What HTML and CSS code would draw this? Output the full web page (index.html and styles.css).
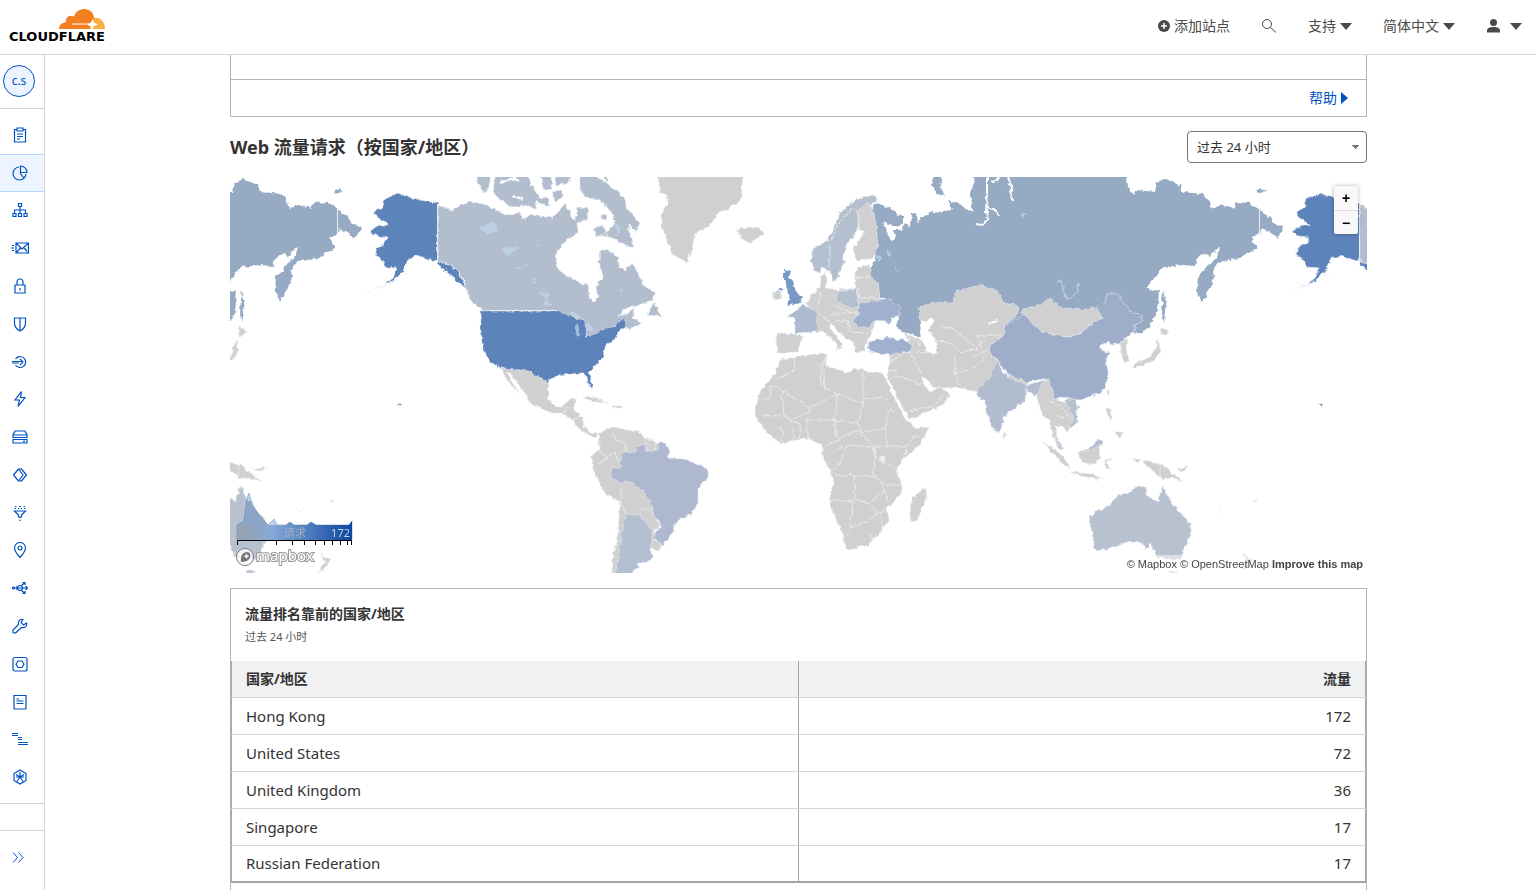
FILE: index.html
```html
<!DOCTYPE html>
<html lang="zh-CN">
<head>
<meta charset="utf-8">
<meta name="viewport" content="width=device-width, initial-scale=1">
<title>Cloudflare 流量分析</title>
<link rel="stylesheet" href="styles.css">
</head>
<body>
<header class="topbar">
  <a class="logo" href="#" aria-label="Cloudflare">
    <svg class="logo-cloud" viewBox="0 0 46 22" aria-hidden="true">
      <path fill="#f38020" d="M0 21C0 17 3 14.500 7 14.500C6 10 10 6 15 8.500C17 3 21 1 25 1C31 1 35 5 35 10L34 15L31 21Z"/>
      <path fill="#faae40" d="M31 21L35 10C41 9 46 14 46 21Z"/>
      <path fill="#fff" d="M33.500 11L35 14.500L39 16.500L35 18L33 22L31 18L28 16.500H13V15.500H29L32 14.500Z"/>
    </svg>
    <span class="logo-word">CLOUDFLARE</span>
  </a>
  <nav class="topnav" aria-label="顶部导航">
    <a class="topnav-item" href="#">
      <svg class="icon-plus" viewBox="0 0 12 12" aria-hidden="true"><circle cx="6" cy="6" r="6" fill="#4a4a4a"/><path d="M6 3V9M3 6H9" stroke="#fff" stroke-width="1.500"/></svg>
      添加站点
    </a>
    <button class="topnav-item" type="button" aria-label="搜索">
      <svg class="icon-16" viewBox="0 0 16 16" fill="none" stroke="#4a4a4a" aria-hidden="true"><circle cx="6" cy="6" r="4.500"/><path d="M9.500 9.500L15 14.500"/></svg>
    </button>
    <button class="topnav-item" type="button">支持 <span class="caret"></span></button>
    <button class="topnav-item" type="button">简体中文 <span class="caret"></span></button>
    <button class="topnav-item user" type="button" aria-label="帐户">
      <svg class="icon-16" viewBox="0 0 16 16" fill="#4a4a4a" aria-hidden="true"><circle cx="7.500" cy="4.500" r="3.500"/><path d="M1 14.500V12.500C1 10 4 9 7.500 9S14 10 14 12.500V14.500Z"/></svg>
      <span class="caret"></span>
    </button>
  </nav>
</header>
<div class="shell">
  <aside class="sidebar">
    <div class="account"><a class="avatar" href="#">c.s</a></div>
    <nav class="side-nav" aria-label="站点导航">
      <a href="#" aria-label="概述"><svg viewBox="0 0 16 16"><path d="M5 2.500H2.500V15H13.500V2.500H11M5 1H11V4H5ZM5 7H11M5 9.500H11M5 12H8"/></svg></a>
      <a class="active" href="#" aria-label="分析"><svg viewBox="0 0 16 16"><path d="M7 2A6.500 6.500 0 1 0 14 9M8.500 1V7.500H15A6.500 6.500 0 0 0 8.500 1ZM8 8L12 13"/></svg></a>
      <a href="#" aria-label="DNS"><svg viewBox="0 0 16 16"><path d="M6.500 1.500H9.500V4.500H6.500ZM8 4.500V11.500M2.500 11.500V8H13.500V11.500M1 11.500H4V14.500H1ZM6.500 11.500H9.500V14.500H6.500ZM12 11.500H15V14.500H12Z"/></svg></a>
      <a href="#" aria-label="电子邮件"><svg class="wide" viewBox="0 0 18 16"><path d="M5 3H17.500V13H5ZM5 3L11 9L17.500 3M5 13L9.500 8M17.500 13L13 8M1 5.500H3M0 8H3M1 10.500H3"/></svg></a>
      <a href="#" aria-label="SSL/TLS"><svg viewBox="0 0 16 16"><path d="M3 7H13V15H3ZM5 7V4A3 3 0 0 1 11 4V7M8 10V12.500"/></svg></a>
      <a href="#" aria-label="防火墙"><svg viewBox="0 0 16 16"><path d="M2.500 2H13.500V7C13.500 11 11 13.500 8 15C5 13.500 2.500 11 2.500 7ZM8 2V15"/></svg></a>
      <a href="#" aria-label="Access"><svg viewBox="0 0 16 16"><path d="M3.500 5A5.500 5.500 0 1 1 3.500 11M0 7.500H11M8 5L11 8L8 11M0 9H7"/></svg></a>
      <a href="#" aria-label="速度"><svg viewBox="0 0 16 16"><path d="M9.500 .5L3 9H7.500L6 15.500L13 6.500H8.500Z"/></svg></a>
      <a href="#" aria-label="缓存"><svg viewBox="0 0 16 16"><path d="M1 6L3 2H13L15 6ZM1 6H15V8.500H1ZM1 10.500H15V14H1ZM11 12.300H13"/></svg></a>
      <a href="#" aria-label="Workers"><svg viewBox="0 0 16 16"><path d="M6.500 2L1.500 8L6.500 14M6.500 2L11 8L6.500 14M9 1.500L14.500 8L9 14.500M6.500 2H9M6.500 14H9"/></svg></a>
      <a href="#" aria-label="规则"><svg viewBox="0 0 16 16"><path d="M2.500 6H13.500L9.500 10V12H6.500V10ZM8 12V13M8 14.500V16M3 1.500H4.500M7 1.500H9M11.500 1.500H13M2.500 3.500H4M6 3.500H7.500M9 3.500H10M12 3.500H13.500"/></svg></a>
      <a href="#" aria-label="网络"><svg viewBox="0 0 16 16"><path d="M8 15.500C4 11 2.500 8.500 2.500 6A5.500 5.500 0 0 1 13.500 6C13.500 8.500 12 11 8 15.500Z"/><circle cx="8" cy="6" r="2"/></svg></a>
      <a href="#" aria-label="流量"><svg viewBox="0 0 16 16"><circle cx="1.500" cy="8" r="1"/><circle cx="8" cy="8" r="2.500"/><path d="M2.500 8H15.500M13.500 6L15.500 8L13.500 10M5 6V10M9.500 5.500L13 2.500M10.500 2.500H13V5M9.500 10.500L13 13.500M10.500 13.500H13V11"/></svg></a>
      <a href="#" aria-label="自定义页面"><svg viewBox="0 0 16 16"><path d="M14.500 5L11.500 7L9 4.500L11 1.500C8.500 .5 5.500 3 6.500 6.500L1 12V14.500L3.500 15L9.500 9.500C13 10.500 15.500 7.500 14.500 5Z"/></svg></a>
      <a href="#" aria-label="应用"><svg viewBox="0 0 16 16"><rect x="1" y="1.500" width="14" height="13.500" rx="2"/><path d="M6 5H10L12 8.200L10 11.500H6L4 8.200Z"/></svg></a>
      <a href="#" aria-label="Scrape Shield"><svg viewBox="0 0 16 16"><path d="M2 1.500H14V15H2ZM4.500 5H7M4.500 7H11.500M4.500 9.500H11.500"/></svg></a>
      <a href="#" aria-label="Zaraz"><svg viewBox="0 0 16 16"><path d="M0 2.500H6M0 4.500H6M6 6.500H10M6 8.500H10M6 11.500H16M6 13.500H16"/></svg></a>
      <a href="#" aria-label="Web3"><svg viewBox="0 0 16 16"><path d="M8 1L14 4.500V11.500L8 15L2 11.500V4.500ZM8 3V8M8 8L4 5.500M8 8L12 5.500M8 8L5 12.500M8 8L11 12.500M8 8H4M8 8H12"/></svg></a>
    </nav>
    <div class="side-gap"></div>
    <button class="side-toggle" type="button" aria-label="展开侧栏"><svg viewBox="0 0 16 16"><path d="M2 3.500L6.500 8.500L2 13.500M7.500 3.500L12 8.500L7.500 13.500"/></svg></button>
  </aside>
  <main class="main">
    <section class="help-card">
      <div class="help-top"></div>
      <div class="help-row"><a href="#">帮助 <span class="tri"></span></a></div>
    </section>
    <div class="section-head">
      <h2>Web 流量请求（按国家/地区）</h2>
      <select class="range" aria-label="时间范围"><option>过去 24 小时</option></select>
    </div>
    <div class="map">
      <svg class="map-canvas" viewBox="230 177 1137 396" role="img" aria-label="按国家/地区划分的请求">
        <defs>
          <filter id="coast" filterUnits="userSpaceOnUse" x="220" y="165" width="1160" height="420">
            <feTurbulence type="fractalNoise" baseFrequency="0.2" numOctaves="2" seed="8" result="n"/>
            <feDisplacementMap in="SourceGraphic" in2="n" scale="5" xChannelSelector="R" yChannelSelector="G"/>
          </filter>
          <linearGradient id="scale"><stop offset="0" stop-color="#9aa0a6" stop-opacity=".7"/><stop offset=".3" stop-color="#86a9d8"/><stop offset="1" stop-color="#0d479f"/></linearGradient>
          <g id="world">
            <g class="ru">
              <path d="M873 205L877 203 890 208 903 217 903 223 897 227 882 222 887 228 888 237 894 241 896 235 892 230 902 230 905 223 911 227 912 212 916 213 917 222 922 218 933 212 953 210 948 200 953 202 962 205 973 213 970 193 975 177V165H1127V177L1128 187 1134 195 1138 190 1155 192 1157 182 1165 179 1180 185 1182 192 1203 194 1210 202 1212 210 1217 205 1230 207 1233 209 1237 202 1250 203 1270 217 1273 223 1284 227 1281 233 1277 238 1262 228 1259 235 1251 237 1257 248 1240 258 1218 262 1213 270 1214 278 1210 287 1202 302 1197 290 1198 277 1207 267 1217 257 1220 248 1215 250 1210 258 1207 253 1198 257 1195 266 1183 265 1163 267 1147 287 1153 292 1159 290 1157 313 1150 325 1142 333 1130 334 1030 322 930 338 920 337 903 332 895 325 900 313 887 298 880 298 878 285 870 278 872 265 875 260 875 252 878 245Z"/>
              <path d="M1163 290L1167 308 1165 311 1164 323 1162 316ZM935 165H943L940 187 945 196 937 194 932 185ZM1256 194L1257 190 1262 188 1266 192Z"/>
            </g>
            <path class="channel" d="M987 165V195L986 212 988 220 982 225 976 224M987 207L997 210 998 216M996 165L998 180 992 182M1006 165L1010 185 1013 200"/>
            <path class="us" d="M437.500 203L425 201 408 197 398 193 385 199 382 208 373 212 378 218 388 225 380 225 370 231 377 236 387 237 385 243 377 247 375 255 382 260 385 267 397 268 393 278 385 285 377 288 390 283 402 273 408 260 415 256 422 257 438 262 452 265 461 277 466 290 456 280 437.500 264ZM377 288L366 294M402 275L408 273"/>
            <path class="ca" d="M437.500 205L452 210 468 202 483 204 495 209 505 215 520 213 522 220 530 215 553 218 560 210 565 203 570 213 575 222 578 207 587 208 589 218 577 223 578 233 567 240 557 252 556 267 567 277 587 285 590 298 595 302 598 297 596 287 603 277 600 267 599 250 607 250 617 257 620 267 627 271 632 262 640 277 643 285 655 292 653 300 633 307 625 308 617 318 635 309 633 318 642 323 630 330 626 327 605 331 590 339 560 325 555 312 485 312 482 310 470 299 463 278 452 265 438 262ZM653 302L648 315 662 317 657 308ZM580 165H597V177L607 183 617 192 625 198 627 210 640 223 635 232 627 227 633 240 632 248 613 238 600 235 607 232 615 223 612 213 600 200 587 198 580 190ZM497 165H529V177L531 185 539 197 548 198 550 206 536 202 535 209 528 205 513 207 500 200 493 190ZM478 165H493L488 190 483 192 478 182ZM536 165H551L552 189 545 190 541 180ZM552 192L562 190 562 198 555 201ZM553 165H575L568 184 556 185ZM593 229L603 225 608 236 597 236ZM601 215L607 214 606 220 601 219ZM602 165H608V181L604 178Z"/>
            <path class="channel" d="M500 183L513 178 519 181M513 196L522 199M610 186L618 184M628 224L634 231"/>
            <path class="us" d="M481 311H555L570 315 583 320 587 330 586 337 597 333 605 329 617 325 622 318 626 320 626 327 618 332 617 337 605 347 603 357 593 368 589 372 593 387 590 387 587 377 583 373 570 374 558 375 549 380 548 385 542 378 535 376 528 370 513 370 500 367 490 362 483 350 481 337Z"/>
            <path class="lake" d="M570 312L580 317 578 320ZM577 324L580 335 576 336ZM588 322L594 331 586 330ZM479 228L495 222 498 229 486 234ZM501 249L519 247 509 256ZM515 268L527 265ZM536 277L533 284ZM541 292L551 306 545 305 549 293ZM537 245L540 246 539 248ZM619 287L623 292ZM615 222L620 228 617 236Z"/>
            <path class="no-data" d="M657 165H743V177L741 200 730 208 717 213 713 222 702 230 695 233 692 248 687 263 683 260 673 255 667 240 662 227 662 213 668 203 667 195 660 192ZM737 229L758 227 764 233 750 243 742 239Z"/>
            <path class="no-data" d="M500 367L513 370 528 370 535 376 542 378 548 385 549 400 555 407 563 407 567 400 576 399 573 410 584 417 583 425 588 432 598 433 595 438 582 432 573 420 562 413 550 413 530 403 528 397 520 387 510 373 507 372 518 393 505 377ZM582 398L590 396 607 403 597 402ZM613 406H622V408H613ZM598 433L612 427 628 430 638 431 645 438 658 443 668 458 652 549 630 515 620 573H611L613 557 618 533 620 502 605 493 592 468 593 455 600 450Z"/>
            <path class="ar" d="M627 515L640 515 653 525 652 537 650 547 653 557 648 562 638 563 638 567 631 573V580H616V573L620 543 623 523Z"/>
            <path class="no-data" d="M652 538L662 545 660 550 652 549ZM642 508L651 510 654 519 660 522 659 529 651 529 641 516Z"/>
            <path class="br" d="M658 443L665 443 670 452 668 458 683 459 698 464 708 469 708 478 698 488 698 503 692 513 675 522 673 532 663 546 652 537 660 528 660 522 652 513 651 502 642 490 630 482 620 483 610 477 612 468 620 467 621 453 635 452 637 447 643 445 647 452 657 450Z"/>
            <path class="border" d="M598 465L606 459 614 452 620 464M609 458L600 452M612 430L615 440 625 444 626 452M605 493L621 503 621 488M646 439L648 450M655 443L654 450M621 503L627 515M563 413L568 407M575 419L581 415"/>
            <path class="no-data" d="M776 333L803 335 797 352 777 353ZM807 303L812 295 820 287 822 275 826 273 826 288 837 290 855 288 855 277 858 267 870 265 872 278 878 285 880 298 872 333 868 338 865 350 857 353 853 343 840 333 832 323 829 327 843 345 837 352 838 345 823 331 815 331Z"/>
            <path class="no-data" d="M919 307L933 302 953 303 955 292 980 285 997 290 1003 303 1018 305 1018 313 1005 325 1003 337 990 345 990 353 998 362 990 378 978 392 957 387 943 388 933 387 923 375 922 383 930 392 940 387 950 395 943 405 920 415 910 420 903 408 890 383 887 377 890 360 892 353 912 350 910 340 903 333 922 340Z"/>
            <path class="sea" d="M920 323L932 318 934 323 928 330 936 340 937 353 927 353 922 337ZM987 323L998 320V321L990 325Z"/>
            <path class="no-data" d="M780 360L795 357 822 353 827 355 825 365 848 373 853 368 863 370 883 373 886 381 897 403 903 415 912 425 916 429 929 426 920 445 903 458 897 470 902 485 902 493 887 508 889 520 882 530 868 545 848 550 843 537 837 520 829 500 834 483 830 468 822 458 823 445 817 443 807 438 780 443 767 432 760 423 755 415 757 400 760 392 775 375ZM925 488L927 495 917 522 911 520 910 513 913 497Z"/>
            <path class="border" d="M775 379L795 370 794 358M758 399L770 398 770 386 776 386 782 390 784 416 762 415M782 390L809 408 838 394 822 386 820 364M827 355L823 362 825 390M838 394L863 404V370M863 398H889M863 404L858 423 834 420 837 409 838 394M809 408V412L790 420 784 416M807 420L834 420M807 420V438M790 420L800 424 800 440M775 425L784 430 780 442M793 442V428M858 423L862 433 885 428 890 408 896 412M834 420L837 440 825 446M837 440L858 430M885 428L889 446 908 446 914 436 920 437M889 446L874 447 858 430M908 446L903 457M832 454L844 445 874 447 876 458 897 470M874 447V476L854 476 852 474 842 477 830 471M846 447L840 464 832 470M874 476L887 485 902 485M854 476L855 500 829 501M855 500L870 503 884 491M870 503L878 514 886 508M853 502L850 528 865 522 878 514M850 533L843 533M870 535L874 538 871 540ZM881 515L882 530M880 480L889 501"/>
            <path class="pale-lake" d="M880 456L886 456 885 462 879 461Z"/>
            <path class="border" d="M890 362L903 353 911 352 915 363 923 375M890 378L900 376 921 385M908 411L935 405 943 395M941 327L953 329 970 342 978 350M934 340L950 343 960 352 974 350 985 340M915 352L938 354M955 356L955 374 960 386M955 374L973 368 986 355M982 350L978 336 1001 335M974 357L988 350M905 337L916 340 921 346M888 371L896 370"/>
            <path class="eu" d="M812 250L828 240 840 213 855 200 873 195 878 200 858 210 858 230 850 240 843 255 844 263 838 277 833 282 829 270 822 267 820 273 813 270 811 260Z"/>
            <path class="no-data" d="M858 210L868 203 873 207 875 220 878 245 873 258 857 261 853 248 865 232 859 230Z"/>
            <path class="border" d="M829 268L830 245 837 226 852 208 858 210M853 278L870 277M858 288L860 298 880 298M832 305L845 310 857 313M830 315L855 312M835 321L848 320 850 332M850 332L870 333M817 312L830 322M821 292L817 310"/>
            <path class="eu" d="M836 292L857 288 859 307 848 307 837 302Z"/>
            <path class="fr" d="M788 315L795 312 803 305 818 312 816 320 818 332 795 333 795 318Z"/>
            <path class="ua" d="M860 302L880 300 887 298 900 307 900 315 892 319 890 325 883 321 873 320 870 328 857 327 853 320 860 313 857 311ZM868 342L887 338 910 341 912 350 890 355 870 352Z"/>
            <path class="uk" d="M784 269L791 271 789 277 793 282 796 292 802 297 800 303 786 306 790 299 788 289 784 280ZM779 287L783 289 779 290Z"/>
            <path class="no-data" d="M773 292L779 290 782 292 781 298 774 299Z"/>
            <path class="no-data" d="M1035 392L1040 382 1048 378 1055 398 1070 405 1076 415 1076 423 1067 431 1063 427 1055 425 1056 435 1063 450 1060 450 1053 435 1050 421 1042 414 1038 400ZM1007 373L1027 379 1027 385 1013 382ZM1003 431L1007 436 1004 439Z"/>
            <path class="eu" d="M1057 437L1064 450 1060 448ZM1065 400L1076 398 1077 423 1068 430 1073 418Z"/>
            <path class="cn" d="M1022 312L1030 317 1043 332 1067 337 1083 333 1088 325 1103 318 1097 308 1105 302 1107 294 1118 294 1123 303 1132 313 1142 314 1142 322 1134 325 1135 332 1120 342 1112 345 1108 341 1100 347 1105 353 1111 352 1105 360 1108 370 1108 380 1102 392 1080 400 1060 397 1055 400 1048 378 1027 382 1007 373 997 360 990 353 990 345 1003 337 1005 325 1020 317Z"/>
            <path class="no-data" d="M1025 308L1040 305 1050 298 1060 307 1083 310 1095 307 1103 318 1088 325 1083 333 1067 337 1043 332 1033 325 1022 312Z"/>
            <path class="in" d="M997 360L1003 372 1013 380 1027 385 1045 380 1035 397 1027 390 1027 398 1017 407 1003 417 1003 427 998 433 995 432 988 417 985 400 977 398 978 388 990 378 992 372ZM1076 406H1080V408H1076Z"/>
            <path class="border" d="M1026 388V400M1050 401L1060 406 1067 414 1072 420M1056 415L1065 418"/>
            <path class="no-data" d="M1120 343L1127 338 1126 348 1129 360 1123 362ZM1132 367L1137 362 1152 357 1158 340 1161 350 1155 360 1137 367ZM1160 330L1163 327 1169 332 1162 336ZM1107 392L1109 389 1109 395ZM1107 408L1111 409 1111 419 1107 417ZM1115 434L1121 432 1121 438ZM1043 442L1053 448 1068 462 1069 470 1062 463ZM1070 472L1092 474 1102 479 1080 476ZM1078 452L1090 450 1098 439 1103 442 1099 451 1100 458 1093 465 1082 462ZM1105 460L1112 458 1107 462 1110 469 1105 468ZM1142 462L1148 461 1163 465 1172 473 1183 481 1172 478 1163 479 1150 468ZM1133 458L1141 460 1137 463ZM1176 470L1188 466 1184 471ZM1242 552L1248 558 1253 559 1247 567 1240 573 1247 562ZM1218 509L1222 512ZM1253 501L1257 500 1255 502Z"/>
            <path class="in" d="M1083 450L1090 448 1098 439 1103 442 1092 450Z"/>
            <path class="au" d="M1163 485L1167 495 1172 503 1180 512 1190 523 1191 535 1183 550 1180 560 1158 558 1150 543 1146 550 1142 542 1130 541 1110 548 1097 551 1094 547 1093 533 1089 517 1097 511 1110 506 1117 495 1130 492 1137 486 1147 487 1146 495 1158 502 1161 490ZM1168 571H1177L1174 576H1170Z"/>
            <path class="border" d="M1160 462V479"/>
            <path class="lake" d="M875 253L882 259 879 262ZM887 248L891 256 888 255ZM895 266L898 271ZM1022 215L1026 212 1023 218Z"/>
            <path class="river" d="M1079 283L1077 293 1066 300M1057 282L1062 281 1063 291 1067 298"/>
            <circle class="us" cx="1321" cy="404" r="1.500"/>
          </g>
        </defs>
        <g filter="url(#coast)">
          <use href="#world"/>
          <use href="#world" x="-922"/>
          <use href="#world" x="922"/>
        </g>
        <path class="meridian" d="M337.500 208V235M437.500 204V262M1259.500 208V235M1359.500 204V262M486 310.500H556"/>
        <path fill="#2862b1" fill-opacity=".3" stroke="#5f7faa" stroke-opacity=".5" d="M237 525L244 521 247 498 249 493 252 503 258 514 268 525 274 519 277 525 286 525 290 522 294 525 307 525 311 522 316 525 349 525 352 521V540H237Z"/>
        <path fill="url(#scale)" d="M237 525H286L290 522 294 525H307L311 522 316 525H349L352 521V540H237Z"/>
        <text class="legend-name" x="284" y="537">请求</text>
        <text class="legend-max" x="350" y="537">172</text>
        <path class="axis" d="M237.500 545V540.500H351.500V545M276.500 541V545M292.500 541V545M304.500 541V545M315.500 541V545M324.500 541V545M332.500 541V545M340.500 541V545M347.500 541V545"/>
        <circle cx="245" cy="557" r="8.500" fill="#fff" fill-opacity=".8" stroke="#777"/>
        <path fill="#777" d="M241 562C240 556 243 552 247 552C250 552 251 555 250 558C248 561 245 562 241 562Z"/>
        <path fill="#fff" d="M246.500 553.500L247.500 555.500 249.500 556 247.500 557 246.500 559 245.500 557 243.500 556 245.500 555.500Z"/>
        <text class="mapbox-word" x="256" y="561">mapbox</text>
      </svg>
      <div class="zoom">
        <button type="button" aria-label="放大">+</button>
        <button type="button" aria-label="缩小">−</button>
      </div>
      <div class="credit"><a href="#">© Mapbox</a> <a href="#">© OpenStreetMap</a> <a class="improve" href="#">Improve this map</a></div>
    </div>
    <section class="rank-card">
      <div class="rank-head">
        <h3>流量排名靠前的国家/地区</h3>
        <p>过去 24 小时</p>
      </div>
      <table class="rank">
        <thead><tr><th scope="col">国家/地区</th><th scope="col">流量</th></tr></thead>
        <tbody>
          <tr><td>Hong Kong</td><td>172</td></tr>
          <tr><td>United States</td><td>72</td></tr>
          <tr><td>United Kingdom</td><td>36</td></tr>
          <tr><td>Singapore</td><td>17</td></tr>
          <tr><td>Russian Federation</td><td>17</td></tr>
        </tbody>
      </table>
      <div class="rank-foot"></div>
    </section>
  </main>
</div>
</body>
</html>
```
FILE: styles.css
```css
* { box-sizing: border-box; }
html, body { height: 100%; }
body {
  margin: 0;
  display: flex;
  flex-direction: column;
  overflow: hidden;
  background: #fff;
  color: #333;
  font: 14px/20px "Noto Sans", "Noto Sans CJK SC", sans-serif;
}
a { color: inherit; text-decoration: none; }
button { padding: 0; border: 0; background: none; color: inherit; font: inherit; cursor: pointer; }
h2, h3, p { margin: 0; }

.topbar {
  flex: none;
  height: 55px;
  display: flex;
  align-items: center;
  justify-content: space-between;
  padding: 0 14px 0 9px;
  border-bottom: 1px solid #d5d5d5;
}
.logo { display: flex; flex-direction: column; align-items: flex-end; padding-bottom: 2px; }
.logo-cloud { width: 46px; height: 22px; }
.logo-word { color: #000; font: bold 13px/14px "DejaVu Sans", sans-serif; }
.topnav { display: flex; align-items: center; gap: 31px; padding-bottom: 2px; color: #4a4a4a; }
.topnav-item { display: flex; align-items: center; gap: 4px; }
.user { gap: 8px; }
.icon-plus { width: 12px; height: 12px; }
.icon-16 { width: 16px; height: 16px; }
.caret { border: 6px solid transparent; border-top: 7px solid #4a4a4a; border-bottom: 0; }

.shell { flex: 1; min-height: 0; display: flex; }
.sidebar {
  flex: none;
  width: 45px;
  display: flex;
  flex-direction: column;
  border-right: 1px solid #d5d5d5;
}
.sidebar svg { width: 16px; height: 16px; fill: none; stroke: #0051c3; stroke-width: 1.200; }
.sidebar svg.wide { width: 18px; }
.account { height: 54px; padding: 10px 3px; border-bottom: 1px solid #d5d5d5; }
.avatar {
  width: 32px;
  height: 32px;
  display: grid;
  place-items: center;
  border: 1px solid #0051c3;
  border-radius: 50%;
  background: #ecf4ff;
  color: #0051c3;
  font-size: 12px;
}
.side-nav { flex: 1; min-height: 0; display: flex; flex-direction: column; padding: 7px 0; }
.side-nav a { flex: 1; display: flex; align-items: center; justify-content: center; padding-right: 4px; }
.side-nav .active { background: #ecf4ff; box-shadow: inset 0 1px #b9d6ff, inset 0 -1px #b9d6ff; }
.side-gap { height: 28px; border-top: 1px solid #d5d5d5; border-bottom: 1px solid #d5d5d5; }
.side-toggle { height: 59px; display: flex; align-items: center; padding: 0 0 8px 11px; }
.side-toggle svg { stroke-width: 1; }

.main { flex: 1; min-width: 0; padding: 0 169px 0 185px; overflow: hidden; }
.help-card { border: 1px solid #b3b3b3; border-top: 0; }
.help-top { height: 25px; border-bottom: 1px solid #b3b3b3; }
.help-row { height: 36px; display: flex; align-items: center; justify-content: flex-end; padding-right: 18px; color: #0051c3; }
.help-row a { display: flex; align-items: center; gap: 4px; }
.tri { border: 6px solid transparent; border-left: 7px solid #0051c3; border-right: 0; }
.section-head { display: flex; align-items: center; justify-content: space-between; margin: 14px 0; }
.section-head h2 { font-size: 18px; line-height: 32px; }
.range {
  width: 180px;
  height: 32px;
  padding: 0 9px;
  appearance: none;
  border: 1px solid #777;
  border-radius: 4px;
  background-color: #fff;
  background-image: linear-gradient(45deg, transparent 50%, #777 50%), linear-gradient(-45deg, transparent 50%, #777 50%);
  background-size: 4px 4px;
  background-position: right 11px center, right 7px center;
  background-repeat: no-repeat;
  color: #333;
  font: inherit;
  font-size: 13px;
}

.map { position: relative; }
.map-canvas { display: block; width: 100%; height: auto; aspect-ratio: 1137 / 396; overflow: hidden; }
.us, .ca, .ar, .br, .eu, .fr, .ua, .cn, .in, .au, .no-data { stroke: #e6eaf0; stroke-width: .600; }
.ru { fill: #96aac4; }
.us { fill: #5d83bb; }
.ca { fill: #b2bece; }
.ar { fill: #b3c0d2; }
.br { fill: #aeb9cf; }
.eu { fill: #b4bfcf; }
.fr { fill: #adbad0; }
.ua { fill: #9fb1ce; }
.uk { fill: #7799c3; }
.cn { fill: #9dadca; }
.in { fill: #b1bdcf; }
.au { fill: #b8c1cf; }
.no-data { fill: #d0d0d0; }
.lake { fill: #c3d7ec; stroke: #c3d7ec; opacity: .7; }
.pale-lake { fill: #ececec; }
.river { fill: none; stroke: #b4c8de; stroke-width: 2; }
.sea { fill: #fff; }
.channel { fill: none; stroke: #fff; stroke-width: 2; }
.border { fill: none; stroke: #f0f0f0; stroke-width: .800; }
.meridian { fill: none; stroke: #e8edf3; }
.axis { fill: none; stroke: #000; }
.legend-name { fill: #a3b1c6; font-size: 11px; }
.legend-max { fill: #c6d3e8; font-size: 11px; text-anchor: end; }
.mapbox-word { fill: #fff; stroke: #999; stroke-width: 2; paint-order: stroke; font: 15px "Noto Sans", sans-serif; }
.zoom {
  position: absolute;
  top: 9px;
  right: 9px;
  display: flex;
  flex-direction: column;
  border-radius: 2px;
  background: #f8f8f8;
  box-shadow: 0 0 4px rgba(0, 0, 0, .3);
}
.zoom button { width: 24px; height: 24px; color: #000; font: bold 14px/24px "Liberation Sans", sans-serif; }
.zoom button + button { border-top: 1px solid #ddd; }
.credit {
  position: absolute;
  right: 0;
  bottom: 0;
  padding: 0 4px;
  background: rgba(255, 255, 255, .5);
  color: #444;
  font: 11px/18px "Liberation Sans", sans-serif;
}
.improve { font-weight: bold; }

.rank-card { margin-top: 15px; border: 1px solid #b3b3b3; }
.rank-head { height: 72px; padding: 15px 14px; }
.rank-head h3 { font-size: 14px; line-height: 20px; }
.rank-head p { padding-top: 4px; color: #555; font-size: 11px; line-height: 18px; }
.rank { width: 100%; table-layout: fixed; border-collapse: collapse; border: 1px solid #a5a5a5; border-top: 0; }
.rank th, .rank td { height: 37px; padding: 0 14px; border-bottom: 1px solid #d5d5d5; text-align: left; }
.rank th { height: 36px; background: #f1f1f1; }
.rank td { font-size: 15px; }
.rank th:last-child, .rank td:last-child { border-left: 1px solid #a5a5a5; text-align: right; }
.rank tbody tr:last-child td { border-bottom: 2px solid #a5a5a5; }
.rank-foot { height: 40px; }
```
